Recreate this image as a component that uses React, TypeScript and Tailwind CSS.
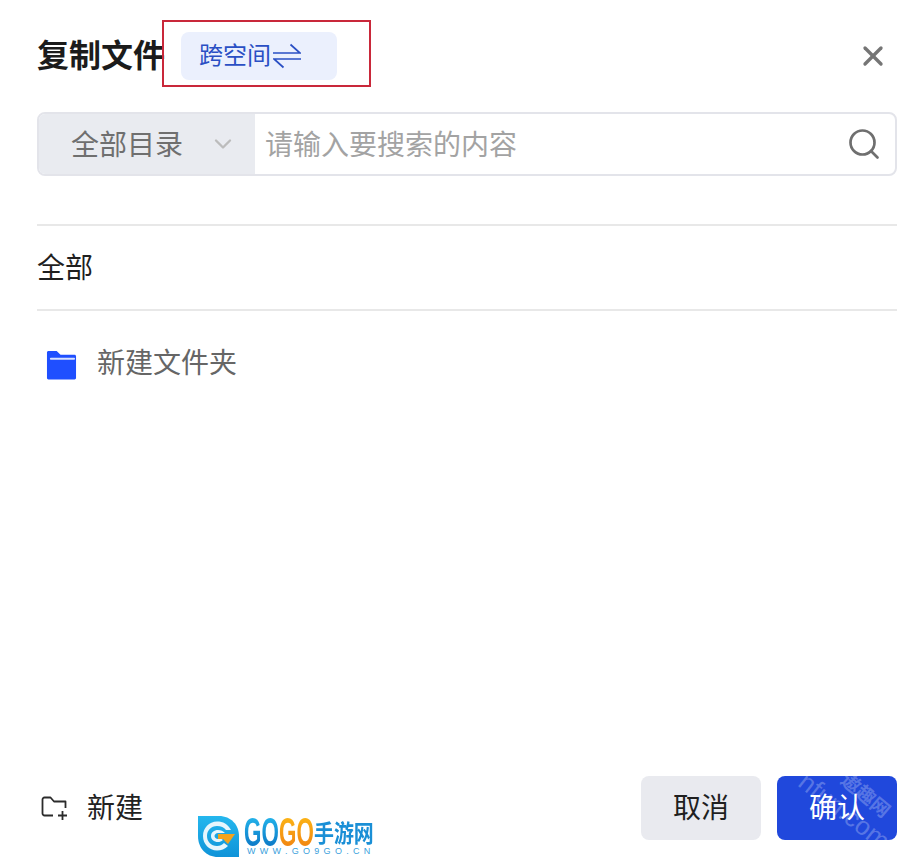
import { ChevronDown, Search, X } from "lucide-react";

const cjk = "font-['Inter','Noto_Sans_CJK_SC',sans-serif]";

function FolderIcon() {
  return (
    <svg width="31" height="31" viewBox="0 0 32 32" className="mt-[2px] shrink-0">
      <path
        d="M1 3.500C1 2.700 1.700 2 2.500 2H11l4 4h14.500c.8 0 1.500.7 1.500 1.500V30c0 .8-.7 1.500-1.500 1.500h-27C1.700 31.500 1 30.800 1 30V3.500Z"
        fill="#1f4fff"
      />
      <rect x="4" y="9" width="26" height="2" rx="1" fill="#d7e1ff" />
    </svg>
  );
}

function NewFolderIcon() {
  return (
    <svg width="28" height="28" viewBox="0 0 28 28" fill="none" stroke="#2b2b2b" strokeWidth="1.800" className="shrink-0">
      <path d="M13 21.500H4.500C3.400 21.500 2.500 20.600 2.500 19.500V5.500C2.500 4.400 3.400 3.500 4.500 3.500H10.500L14 7.500H25.500V14" strokeLinejoin="round" />
      <path d="M22.500 17V26M18 21.500H27" />
    </svg>
  );
}

function SwapIcon() {
  return (
    <svg width="28" height="26" viewBox="0 0 28 26" fill="none" stroke="#2a4fc4" strokeWidth="1.700" className="shrink-0">
      <path d="M0 10H27L17.500 1.500" />
      <path d="M28 16H1L10.500 24.500" />
    </svg>
  );
}

function GoLogo() {
  return (
    <div className="absolute top-[816px] left-[198px] flex items-start gap-[5px]">
      <svg width="41" height="41" viewBox="0 0 41 41" className="shrink-0">
        <defs>
          <linearGradient id="logoBg" x1="0" y1="0" x2="0" y2="1">
            <stop offset="0" stopColor="#25b7ee" />
            <stop offset="1" stopColor="#0f93d8" />
          </linearGradient>
        </defs>
        <path d="M0 0H21C33 0 41 9 41 20V41H20C8 41 0 32 0 20V0Z" fill="url(#logoBg)" />
        <path d="M33 14C30 8 25 5.500 19 5.500C11 5.500 5 12 5 20C5 28 11 34.500 19 34.500C23 34.500 27 33 30 30L26 27C24 29 22 30 19 30C13 30 9 25.500 9 20C9 14.500 13 10 19 10C23 10 26 11.500 28 14Z" fill="#e6f6fd" />
        <path d="M27 17C25 15 23 14 20 14C16 14 13 16.500 13 20C13 23.500 16 26 20 26C22 26 23 25.500 25 24L22 22C21 22.500 20.500 23 20 23C18 23 16.500 21.500 16.500 20C16.500 18.500 18 17 20 17Z" fill="#e6f6fd" />
        <path d="M20 18H37L30 28L25 23H20Z" fill="#f2a31c" />
      </svg>
      <div className="flex flex-col">
        <div className="flex h-[31px] items-center whitespace-nowrap">
          <div className="w-[35px]">
            <span className="inline-block origin-left scale-x-[0.56] bg-gradient-to-b from-[#28bdf0] to-[#0c6fc0] bg-clip-text font-['Liberation_Sans',sans-serif] text-[40px] leading-none font-bold text-transparent">GO</span>
          </div>
          <div className="w-[35px]">
            <span className="inline-block origin-left scale-x-[0.56] bg-gradient-to-b from-[#fdbb16] to-[#ee7d11] bg-clip-text font-['Liberation_Sans',sans-serif] text-[40px] leading-none font-bold text-transparent">GO</span>
          </div>
          <span className="inline-block origin-left scale-x-[0.83] font-['Noto_Sans_CJK_SC',sans-serif] text-[24px] leading-none font-bold text-[#1a8fd6]">手游网</span>
        </div>
        <span className="ml-[3px] font-['Liberation_Sans',sans-serif] text-[9px] leading-[9px] tracking-[4.300px] whitespace-nowrap text-[#3a9fdc]">WWW.GO9GO.CN</span>
      </div>
    </div>
  );
}

export default function App() {
  return (
    <div className={`relative flex h-[867px] w-[922px] flex-col overflow-hidden bg-white pr-[25px] pl-[37px] ${cjk}`}>
      <div className="flex h-[112px] shrink-0 items-start justify-between pt-[32px]">
        <div className="flex items-center">
          <h1 className="w-[144px] text-[32px] leading-[48px] font-bold whitespace-nowrap text-[#1b1b1b]">复制文件</h1>
          <div className="flex h-[48px] w-[156px] items-center gap-[2px] rounded-lg bg-[#ebf0fd] pl-[18px] text-[24px] text-[#2a4fc4]">
            跨空间
            <SwapIcon />
          </div>
        </div>
        <X size={32} strokeWidth={2.500} className="mt-[8px] mr-[8px] text-[#757575]" />
      </div>

      <div className="flex h-[64px] shrink-0 overflow-hidden rounded-lg border-2 border-[#e3e4ea]">
        <div className="flex w-[216px] shrink-0 items-center justify-between bg-[#e9ebf0] pr-[18px] pl-[32px] text-[28px] text-[#6f6f6f]">
          <span className="pt-[1px]">全部目录</span>
          <ChevronDown size={28} className="text-[#bcbcbc]" />
        </div>
        <div className="flex flex-1 items-center justify-between pr-[13px] pl-[10px] text-[28px] text-[#a3a3a3]">
          <span className="pt-[1px]">请输入要搜索的内容</span>
          <Search size={36} strokeWidth={1.800} className="text-[#6f6f6f]" />
        </div>
      </div>

      <div className="mt-[48px] flex h-[87px] shrink-0 items-center border-y-2 border-[#e8e8e8] text-[28px] text-[#1f1f1f]">全部</div>

      <div className="mt-[24px] flex h-[56px] shrink-0 items-center gap-[20px] pl-[9px] text-[28px] text-[#666666]">
        <FolderIcon />
        新建文件夹
      </div>

      <div className="mt-auto mb-[27px] flex h-[64px] shrink-0 items-center justify-between">
        <div className="flex items-center gap-[19px] pl-[3px] text-[28px] text-[#222222]">
          <NewFolderIcon />
          新建
        </div>
        <div className="flex gap-[16px] text-[28px]">
          <button className="h-[64px] w-[120px] rounded-lg bg-[#e9eaef] text-[#1f1f1f]">取消</button>
          <button className="relative h-[64px] w-[120px] overflow-hidden rounded-lg bg-[#2048dc] text-white">
            <span className="absolute top-[10px] left-[60px] rotate-[40deg] text-[19px] leading-none font-bold whitespace-nowrap text-white/25">遨趣网</span>
            <span className="absolute top-[22px] left-[14px] rotate-[38deg] font-['Liberation_Sans',sans-serif] text-[26px] leading-none whitespace-nowrap text-white/25">nfun.com</span>
            <span className="relative">确认</span>
          </button>
        </div>
      </div>

      {/* 截图上叠加的标注框和水印 */}
      <div className="pointer-events-none absolute top-[20px] left-[162px] h-[67px] w-[209px] border-2 border-[#c9283a]" />
      <GoLogo />
    </div>
  );
}
